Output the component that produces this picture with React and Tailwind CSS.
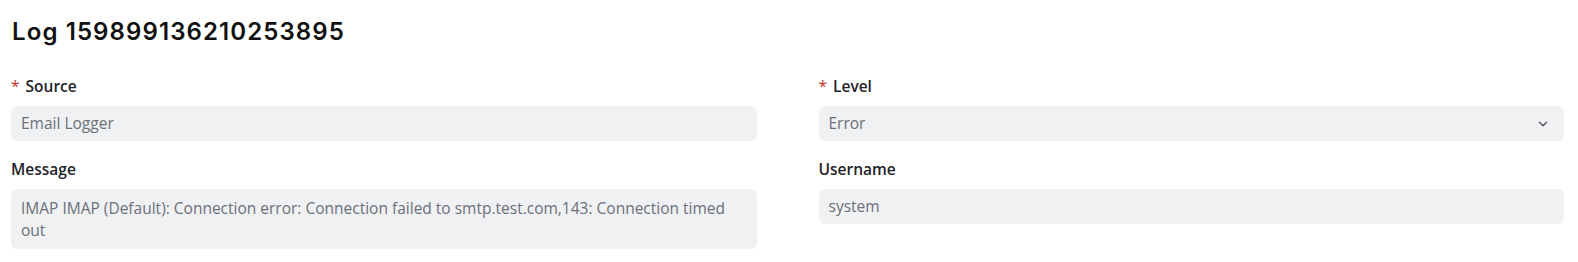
import { ChevronDown } from 'lucide-react';

const fields = [
  { label: 'Source', required: true, value: 'Email Logger' },
  { label: 'Level', required: true, value: 'Error', select: true },
  {
    label: 'Message',
    value: 'IMAP IMAP (Default): Connection error: Connection failed to smtp.test.com,143: Connection timed out',
    multiline: true,
  },
  { label: 'Username', value: 'system' },
];

function Field({ label, required, value, select, multiline }) {
  return (
    <div className="flex flex-col">
      <label className="flex items-center text-[15.5px] leading-[20px] font-semibold text-[#1f2329] mb-[10px]">
        {required && <span className="text-[#c0392b] mr-[6px] font-normal">*</span>}
        {label}
      </label>
      {multiline ? (
        <div className="rounded-md bg-[#f0f1f3] px-[10px] py-[8px] text-[15.5px] leading-[22px] text-[#6b7079]">
          {value}
        </div>
      ) : (
        <div className="flex items-center justify-between h-[35px] rounded-md bg-[#f0f1f3] px-[10px] text-[15.5px] text-[#6b7079]">
          <span>{value}</span>
          {select && <ChevronDown className="w-[14px] h-[14px] text-[#4b4f57] mr-[4px]" strokeWidth={2.2} />}
        </div>
      )}
    </div>
  );
}

export default function App() {
  return (
    <div
      className="min-h-screen bg-white pl-[11px] pr-[14px] pt-[16px]"
      style={{ fontFamily: '"Open Sans", sans-serif' }}
    >
      <h1
        className="text-[24px] leading-[32px] font-semibold tracking-[1.1px] text-[#111] pl-[1px]"
        style={{ fontFamily: 'Inter, sans-serif' }}
      >
        Log 159899136210253895
      </h1>
      <div className="grid grid-cols-2 gap-x-[62px] gap-y-[18px] mt-[28px] items-start">
        {fields.map((f) => (
          <Field key={f.label} {...f} />
        ))}
      </div>
    </div>
  );
}
